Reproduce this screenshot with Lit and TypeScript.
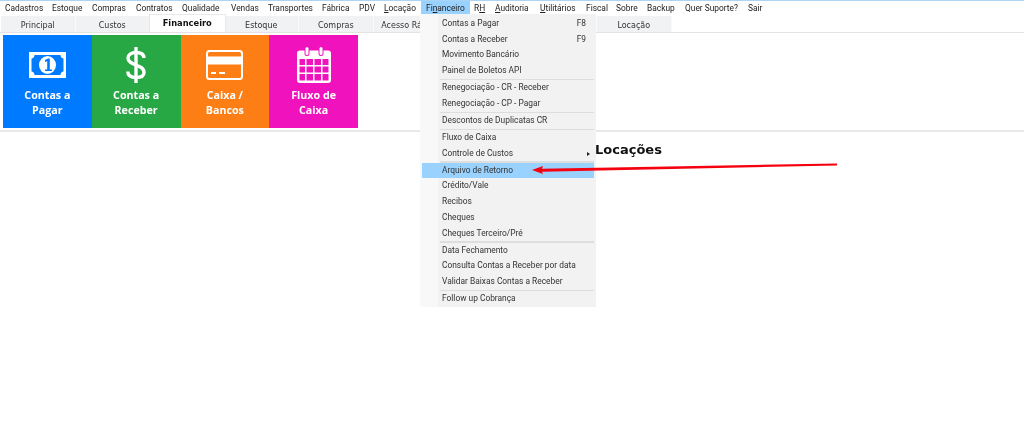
import { LitElement, html, css, svg } from "lit";
import { customElement } from "lit/decorators.js";

const topItems: [string, number, number?][] = [
  ["Cadastros", 47], ["Estoque", 40], ["Compras", 44], ["Contratos", 46], ["Qualidade", 49],
  ["Vendas", 37], ["Transportes", 54], ["Fábrica", 37], ["PDV", 25], ["Locação", 41, 0],
  ["Financeiro", 49, 2], ["RH", 21, 1], ["Auditoria", 45, 0], ["Utilitários", 46, 0], ["Fiscal", 30],
  ["Sobre", 31], ["Backup", 38], ["Quer Suporte?", 63], ["Sair", 30],
];
const tabs = ["Principal", "Custos", "Financeiro", "Estoque", "Compras", "Acesso Rápido", "", "", "Locação"];
type Row = { t: string; k?: string; sub?: boolean; hi?: boolean } | null;
const rows: Row[] = [
  { t: "Contas a Pagar", k: "F8" }, { t: "Contas a Receber", k: "F9" }, { t: "Movimento Bancário" }, { t: "Painel de Boletos API" }, null,
  { t: "Renegociação - CR - Receber" }, { t: "Renegociação - CP - Pagar" }, null,
  { t: "Descontos de Duplicatas CR" }, null,
  { t: "Fluxo de Caixa" }, { t: "Controle de Custos", sub: true }, null,
  { t: "Arquivo de Retorno", hi: true }, { t: "Crédito/Vale" }, { t: "Recibos" }, { t: "Cheques" }, { t: "Cheques Terceiro/Pré" }, null,
  { t: "Data Fechamento" }, { t: "Consulta Contas a Receber por data" }, { t: "Validar Baixas Contas a Receber" }, null,
  { t: "Follow up Cobrança" },
];
const money = svg`<svg width="37" height="26" viewBox="0 0 37 26"><path fill="#fff" fill-rule="evenodd" d="M0 0h37v26H0zM5.500 3c0 2-1.500 3.500-3 3.500v13c1.500 0 3 1.500 3 3.500h26c0-2 1.500-3.500 3-3.500v-13c-1.500 0-3-1.500-3-3.500z"/><ellipse cx="18.500" cy="13" rx="8.500" ry="9" fill="#fff"/><path fill="#007bff" d="M16 8l3-1.500h1.800V17.500H23V19h-7v-1.500h2.200V9.200l-2.200.9z"/></svg>`;
const dollar = svg`<svg width="20" height="36" viewBox="0 0 20 36"><path fill="none" stroke="#fff" stroke-width="3.400" d="M18 11c0-3.500-3-5.500-8-5.500S2 8 2 11c0 8 16 6 16 14.500 0 3.500-3 5-8 5s-8.200-2-8.200-6"/><path stroke="#fff" stroke-width="3.400" d="M10 0v36"/></svg>`;
const card = svg`<svg width="37" height="30" viewBox="0 0 37 30"><rect x="1" y="1" width="35" height="28" rx="2.500" fill="none" stroke="#fff" stroke-width="2"/><rect x="1" y="6.500" width="35" height="8" fill="#fff"/><path stroke="#fff" stroke-width="2" d="M5 23h5M13 23h6"/></svg>`;
const cal = svg`<svg width="34" height="36" viewBox="0 0 34 36"><path fill="#fff" fill-rule="evenodd" d="M3 3.500h4.500v3a2.500 2.500 0 0 0 5 0v-3h9v3a2.500 2.500 0 0 0 5 0v-3H31a3 3 0 0 1 3 3V33a3 3 0 0 1-3 3H3a3 3 0 0 1-3-3V6.500a3 3 0 0 1 3-3zM2.500 12v6h5.500v-6zM9.500 12v6h6.500v-6zM17.500 12v6h6.500v-6zM25.500 12v6h6v-6zM2.500 19.500v6h5.500v-6zM9.500 19.500v6h6.500v-6zM17.500 19.500v6h6.500v-6zM25.500 19.500v6h6v-6zM2.500 27v6.500h5.500V27zM9.500 27v6.500h6.500V27zM17.500 27v6.500h6.500V27zM25.500 27v6.500h6V27z"/><rect x="8.500" y="0" width="3" height="8" rx="1.500" fill="#fff"/><rect x="22.500" y="0" width="3" height="8" rx="1.500" fill="#fff"/></svg>`;
const tiles = [
  { c: "#007bff", a: "Contas a", b: "Pagar", i: money },
  { c: "#28a745", a: "Contas a", b: "Receber", i: dollar },
  { c: "#fd7e14", a: "Caixa /", b: "Bancos", i: card },
  { c: "#f013bd", a: "Fluxo de", b: "Caixa", i: cal },
];

@customElement("app-root")
export class AppRoot extends LitElement {
  static styles = css`
    :host { display: block; position: relative; width: 1024px; height: 434px; overflow: hidden; background: #fff; font-family: "Roboto", "Open Sans", sans-serif; color: #222; filter: blur(0.3px); }
    .topline { height: 1px; background: #a9d4f5; }
    .bar { display: flex; height: 13px; padding-left: 1px; font-size: 8.400px; align-items: center; }
    .bar span { padding-left: 4px; white-space: nowrap; height: 13px; line-height: 14px; box-sizing: border-box; }
    .bar span.on { background: #99d1ff; padding-left: 5px; }
    .tabs { display: flex; height: 17px; margin-top: 2px; padding-left: 1px; border-bottom: 1px solid #e3e3e3; box-sizing: border-box; font-family: "DejaVu Sans", sans-serif; font-size: 8px; }
    .tab { width: 74.500px; flex: none; background: #f1f2f4; text-align: center; line-height: 19px; border-right: 1px solid #fafafa; color: #333; white-space: nowrap; overflow: hidden; box-sizing: border-box; height: 16px; }
    .tab.on { background: #fff; height: 18px; margin: -2px -1px 0; width: 76.500px; font-weight: 700; font-size: 8.300px; line-height: 16px; color: #111; border: 1px solid #e8e8e8; border-bottom: none; position: relative; }
    .tiles { display: flex; margin: 2px 0 0 3px; height: 93px; }
    .tile { width: 88.750px; color: #fff; display: flex; flex-direction: column; align-items: center; box-sizing: border-box; font-family: "Open Sans", sans-serif; font-weight: 700; font-size: 10.700px; line-height: 15px; text-align: center; }
    .ico { height: 40px; margin: 10px 0 2.500px; display: flex; align-items: center; justify-content: center; }
    .rule { height: 1.500px; margin-top: 2px; background: #e8e8e8; }
    .title { margin: 9px 0 0 595px; font-family: "DejaVu Sans", sans-serif; font-weight: 700; font-size: 13px; line-height: 17px; color: #111; }
    .menu { position: absolute; left: 420px; top: 14px; width: 176px; height: 293px; box-sizing: border-box; padding: 1.800px 2px 0; font-size: 8.400px; background: linear-gradient(90deg, #f8f8f8 18px, #f2f2f2 18px); }
    .row { height: 15.750px; line-height: 15.750px; padding-left: 20px; position: relative; white-space: nowrap; color: #333; }
    .row.hi { background: #99d1ff; }
    .key { position: absolute; right: 8px; top: 0; }
    .caret { position: absolute; right: 4px; top: 6px; width: 0; height: 0; border-left: 3px solid #222; border-top: 2.500px solid transparent; border-bottom: 2.500px solid transparent; }
    .sep { height: 1.250px; background: #dedede; margin-left: 18px; }
    .arrow { position: absolute; left: 0; top: 0; pointer-events: none; }
  `;
  label(t: string, i?: number) {
    return i === undefined ? t : html`${t.slice(0, i)}<u>${t[i]}</u>${t.slice(i + 1)}`;
  }
  render() {
    return html`
      <div class="topline"></div>
      <div class="bar">${topItems.map(([t, w, i]) => html`<span class=${t === "Financeiro" ? "on" : ""} style="width:${w}px">${this.label(t, i)}</span>`)}</div>
      <div class="tabs">${tabs.map((t) => html`<div class="tab ${t === "Financeiro" ? "on" : ""}">${t}</div>`)}</div>
      <div class="tiles">${tiles.map((x) => html`<div class="tile" style="background:${x.c}"><div class="ico">${x.i}</div><div>${x.a}</div><div>${x.b}</div></div>`)}</div>
      <div class="rule"></div>
      <div class="title">Locações</div>
      <div class="menu">${rows.map((r) => r === null ? html`<div class="sep"></div>` : html`<div class="row ${r.hi ? "hi" : ""}">${r.t}${r.k ? html`<span class="key">${r.k}</span>` : ""}${r.sub ? html`<i class="caret"></i>` : ""}</div>`)}</div>
      <svg class="arrow" width="1024" height="434"><polygon fill="#f5000f" points="532,170 543,166 542,168.700 837,163.500 837,165.500 542,171.700 543,174" /></svg>
    `;
  }
}
